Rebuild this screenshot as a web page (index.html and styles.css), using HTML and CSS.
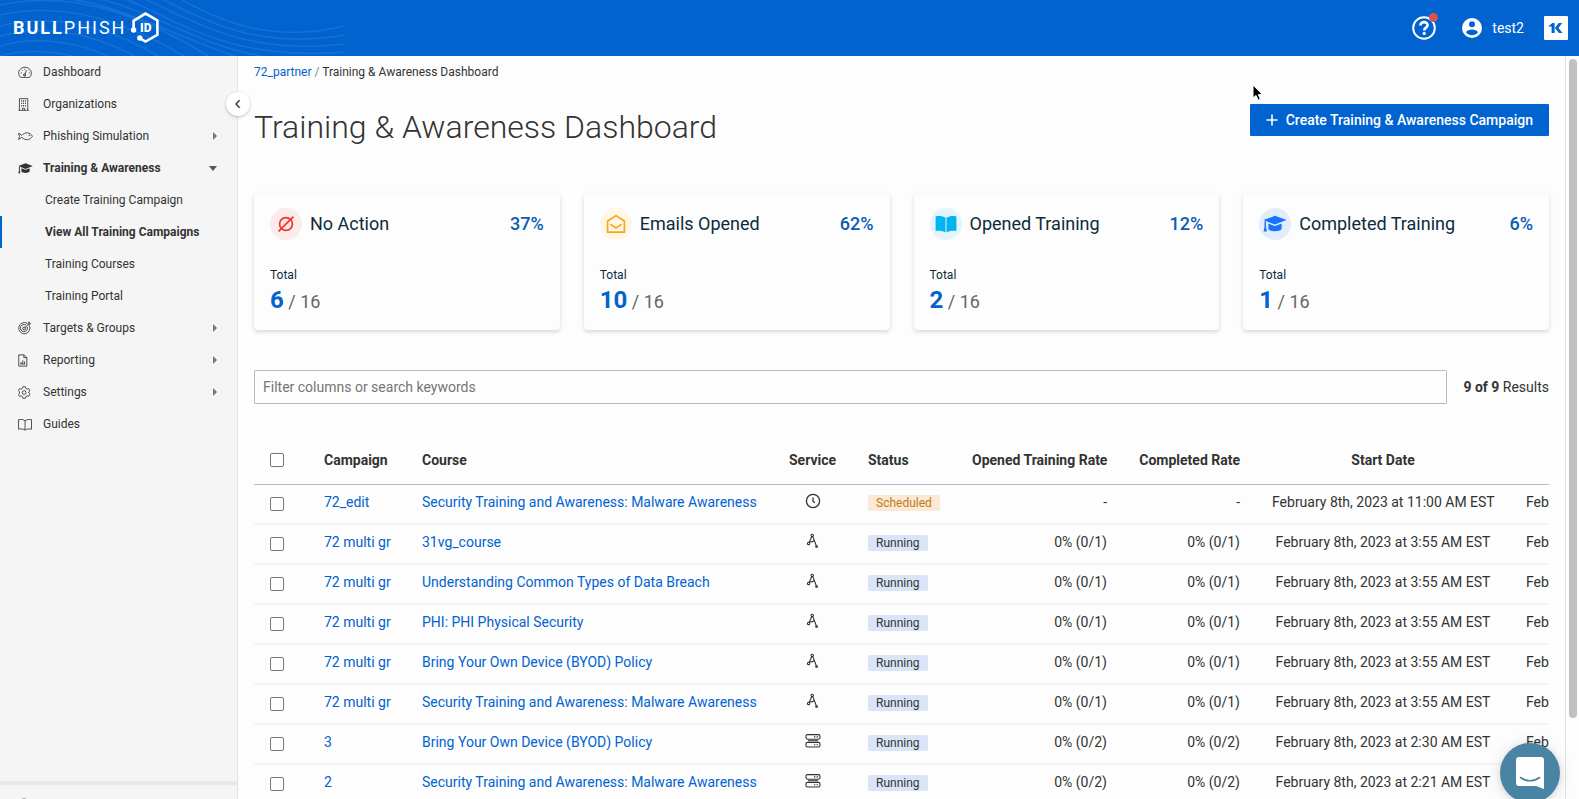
FILE: index.html
```html
<!DOCTYPE html>
<html lang="en">
<head>
    <meta charset="UTF-8">
    <meta name="viewport" content="width=device-width, initial-scale=1.0">
    <title>BullPhish ID - Training &amp; Awareness Dashboard</title>
    <link rel="stylesheet" href="styles.css">
</head>
<body>
    <!-- Shared icons -->
    <svg class="icon-defs" aria-hidden="true">
        <symbol id="icon-clock" viewBox="0 0 16 16">
            <circle cx="8" cy="8" r="6.6" fill="none" stroke="currentColor" stroke-width="1.3"/>
            <path d="M8 4.5V8.2L9.8 9.8" fill="none" stroke="currentColor" stroke-width="1.3"/>
        </symbol>
        <symbol id="icon-compass" viewBox="0 0 16 16">
            <g fill="none" stroke="currentColor" stroke-width="1.1">
                <circle cx="7.2" cy="2.4" r="1.2"/>
                <circle cx="3.6" cy="10.4" r="1.2"/>
                <path d="M6.8 3.6L4.2 9.3M7.8 3.6L11.4 13M5 8.4C6.6 9.2 8.2 8.6 9 7.4"/>
                <circle cx="11.6" cy="13.6" r="0.9"/>
            </g>
        </symbol>
        <symbol id="icon-server" viewBox="0 0 16 16">
            <g fill="none" stroke="currentColor" stroke-width="1.1">
                <rect x="1" y="1.6" width="14" height="4.6" rx="1.6"/>
                <rect x="1" y="9.4" width="14" height="4.6" rx="1.6"/>
                <path d="M3 7.8H13M9 3.9H10.4M11.6 3.9H13M9 11.7H10.4M11.6 11.7H13"/>
            </g>
        </symbol>
        <symbol id="icon-cap" viewBox="0 0 16 12">
            <path fill="currentColor" d="M8 0.5L0.3 3.4L8 6.4L15.7 3.4Z"/>
            <path fill="currentColor" d="M3.6 5.7V9.3C4.8 11.3 11.2 11.3 12.4 9.3V5.7L8 7.4Z"/>
            <path fill="currentColor" d="M1 4.2H2V8L2.6 11H0.4L1 8Z"/>
        </symbol>
    </svg>

    <!-- Top bar -->
    <header class="topbar">
        <svg class="topbar-waves" viewBox="0 0 345 56" aria-hidden="true">
            <g fill="none" stroke="#fff" stroke-width="1.6" stroke-opacity="0.09">
                <path d="M0 56C20 50 50 50 72 56"/>
                <path d="M0 46C30 37 70 39 108 56"/>
                <path d="M0 36C40 26 88 30 134 56"/>
                <path d="M0 26C48 14 100 22 158 56"/>
                <path d="M0 15C56 3 112 14 184 56"/>
                <path d="M0 5C62 -8 128 6 208 56"/>
                <path d="M52 -3C110 0 160 30 234 56"/>
                <path d="M96 -2C150 10 200 46 262 56"/>
                <path d="M122 -2C170 14 220 62 345 52"/>
                <path d="M142 -2C190 18 240 56 345 44"/>
                <path d="M160 -2C205 20 255 50 345 35"/>
                <path d="M178 -2C220 20 268 44 345 26"/>
            </g>
        </svg>
        <a href="#" class="brand">
            <span class="brand-name"><b>BULL</b>PHISH</span>
            <svg class="brand-badge" viewBox="0 0 30 34" aria-label="ID">
                <path d="M3.6 18.5V9.8L15.5 2.6L27.4 9.4V23.8L15.5 30.6L10.5 27.6" fill="none" stroke="#fff" stroke-width="2.6"/>
                <circle cx="3.6" cy="19" r="2.7" fill="#fff"/>
                <circle cx="9.8" cy="27" r="2.7" fill="#fff"/>
                <text x="15.8" y="20.8" class="brand-id">ID</text>
            </svg>
        </a>
        <div class="topbar-actions">
            <button type="button" class="help-btn" aria-label="Help">
                <svg viewBox="0 0 24 24" width="24" height="24">
                    <circle cx="12" cy="12" r="10.8" fill="none" stroke="#fff" stroke-width="2"/>
                    <path d="M8.4 9.4C8.4 4.9 15.8 5.1 15.6 9.3C15.5 11.6 12.2 11.7 12.2 14.4" fill="none" stroke="#fff" stroke-width="2.6"/>
                    <circle cx="12.2" cy="17.4" r="1.6" fill="#fff"/>
                </svg>
                <span class="help-dot"></span>
            </button>
            <button type="button" class="user-btn">
                <svg viewBox="0 0 20 20" width="20" height="20">
                    <circle cx="10" cy="10" r="10" fill="#fff"/>
                    <circle cx="10" cy="6.2" r="3" fill="#0063cf"/>
                    <path d="M4 14.2C5.6 10.6 14.4 10.6 16 14.2C13.6 18.2 6.4 18.2 4 14.2Z" fill="#0063cf"/>
                </svg>
                test2
            </button>
            <a href="#" class="k-logo" aria-label="Kaseya One">
                <svg viewBox="0 0 24 24" width="24" height="24">
                    <path d="M4.6 10L8.4 7H10.6V17H7.6V10.6H4.6ZM11 12L14.6 7H18.2L14.5 12L18.6 17H14.8Z" fill="#0063cf"/>
                </svg>
            </a>
        </div>
    </header>

    <div class="layout">
        <!-- Sidebar -->
        <aside class="sidebar">
            <nav class="side-nav">
                <a href="#" class="side-link">
                    <svg class="side-icon" viewBox="0 0 16 16">
                        <path d="M2.6 13.2C-1.6 8.4 2 2.4 7.5 2.4S16.6 8.4 12.4 13.2Z"/>
                        <path d="M7 11.4L9 5.4M3 8.4H4.2M4.2 5.4L5 6.2M7 4V5M11.4 8.4H12.4M10.8 5.6L11.4 5"/>
                        <circle cx="7" cy="10.6" r="1.2"/>
                    </svg>
                    Dashboard
                </a>
                <a href="#" class="side-link">
                    <svg class="side-icon" viewBox="0 0 16 16">
                        <path d="M0.5 14.2H11.5M1.5 14.2V1.8H10.4V14.2M4.8 14.2V12H7V14.2"/>
                        <path d="M3.4 4.2H4.4M5.4 4.2H6.4M7.4 4.2H8.4M3.4 6.8H4.4M5.4 6.8H6.4M7.4 6.8H8.4M3.4 9.4H4.4M5.4 9.4H6.4M7.4 9.4H8.4" stroke-width="1.5"/>
                    </svg>
                    Organizations
                </a>
                <a href="#" class="side-link has-menu">
                    <svg class="side-icon" viewBox="0 0 16 16">
                        <path d="M0.6 4.4L4.2 6.8C7.4 2.8 13 3.4 15.4 7.8C13 12 7.4 12.6 4.2 8.9L0.6 11.2L1.6 7.9Z"/>
                        <circle cx="12" cy="6.8" r="0.4"/>
                    </svg>
                    Phishing Simulation
                </a>
                <a href="#" class="side-link has-menu open">
                    <svg class="side-icon solid" viewBox="0 0 16 12"><use href="#icon-cap"/></svg>
                    Training &amp; Awareness
                </a>
                <a href="#" class="side-sublink">Create Training Campaign</a>
                <a href="#" class="side-sublink active">View All Training Campaigns</a>
                <a href="#" class="side-sublink">Training Courses</a>
                <a href="#" class="side-sublink">Training Portal</a>
                <a href="#" class="side-link has-menu">
                    <svg class="side-icon" viewBox="0 0 16 16">
                        <path d="M9.6 2.4A6 6 0 1 0 12 4.8M8.8 4.6A3.8 3.8 0 1 0 10 6.4M6.6 8L10.6 4V2.2L12 1V2.6H13.4L12.4 4H10.6"/>
                        <circle cx="6.6" cy="8" r="1.6"/>
                    </svg>
                    Targets &amp; Groups
                </a>
                <a href="#" class="side-link has-menu">
                    <svg class="side-icon" viewBox="0 0 16 16">
                        <path d="M0.8 2H6.4L9.4 4.8V14H0.8ZM6.2 2V5H9.4M3.2 11.8V9.6M5.1 11.8V7.8M7 11.8V9M2.6 11.8H7.6"/>
                    </svg>
                    Reporting
                </a>
                <a href="#" class="side-link has-menu">
                    <svg class="side-icon" viewBox="0 0 16 16">
                        <path d="M5.2 1.8H7.8L8.3 3.6L9.7 4.4L11.5 3.9L12.8 6.1L11.5 7.3V8.7L12.8 9.9L11.5 12.1L9.7 11.6L8.3 12.4L7.8 14.2H5.2L4.7 12.4L3.3 11.6L1.5 12.1L0.4 9.9L1.6 8.7V7.3L0.4 6.1L1.5 3.9L3.3 4.4L4.7 3.6Z" stroke-linejoin="round"/>
                        <circle cx="6.5" cy="8" r="2"/>
                    </svg>
                    Settings
                </a>
                <a href="#" class="side-link">
                    <svg class="side-icon" viewBox="0 0 16 16">
                        <path d="M7.5 4C5.6 2.6 3 2.4 0.6 2.8V13C3 12.6 5.6 12.6 7.5 14C9.4 12.6 12 12.6 14.4 13V2.8C12 2.4 9.4 2.6 7.5 4ZM7.5 4V13.8"/>
                    </svg>
                    Guides
                </a>
            </nav>
            <div class="side-footer">
                <a href="#" class="side-link">
                    <svg class="side-icon" viewBox="0 0 16 16"><circle cx="6.5" cy="7" r="6"/></svg>
                    Get Help
                </a>
            </div>
            <button type="button" class="collapse-btn" aria-label="Collapse menu">
                <svg viewBox="0 0 8 10" width="8" height="10"><path d="M5.6 1.2L2 5L5.6 8.8" fill="none" stroke="#333" stroke-width="1.4"/></svg>
            </button>
        </aside>

        <!-- Main content -->
        <main class="content">
            <div class="breadcrumb"><a href="#">72_partner</a> <span>/</span> Training &amp; Awareness Dashboard</div>

            <div class="page-head">
                <h1>Training &amp; Awareness Dashboard</h1>
                <button type="button" class="btn-primary">
                    <svg viewBox="0 0 12 12" width="12" height="12"><path d="M6 0.5V11.5M0.5 6H11.5" stroke="#fff" stroke-width="1.6"/></svg>
                    Create Training &amp; Awareness Campaign
                </button>
            </div>

            <!-- Summary cards -->
            <section class="cards">
                <div class="card">
                    <div class="card-head">
                        <span class="card-icon red">
                            <svg viewBox="0 0 20 20" width="20" height="20"><g fill="none" stroke="#f5322d" stroke-width="1.7"><circle cx="10" cy="10" r="6.4"/><path d="M2.6 17.4L17.4 2.6"/></g></svg>
                        </span>
                        <h2>No Action</h2>
                        <span class="percent">37%</span>
                    </div>
                    <p class="total-label">Total</p>
                    <p class="total"><b>6</b> / 16</p>
                </div>
                <div class="card">
                    <div class="card-head">
                        <span class="card-icon yellow">
                            <svg viewBox="0 0 20 20" width="20" height="20"><g fill="none" stroke="#faa61a" stroke-width="1.7" stroke-linejoin="round"><path d="M1.6 7L10 1.6L18.4 7V18.2H1.6Z"/><path d="M4.4 10.2L10 14L15.6 10.2"/></g></svg>
                        </span>
                        <h2>Emails Opened</h2>
                        <span class="percent">62%</span>
                    </div>
                    <p class="total-label">Total</p>
                    <p class="total"><b>10</b> / 16</p>
                </div>
                <div class="card">
                    <div class="card-head">
                        <span class="card-icon cyan">
                            <svg viewBox="0 0 22 18" width="22" height="18"><path d="M0.6 1.4C4 0.8 8 1 10.5 2.8V17.4C8 15.6 4 15.4 0.6 16ZM21.4 1.4C18 0.8 14 1 11.5 2.8V17.4C14 15.6 18 15.4 21.4 16Z" fill="#00b5ee"/></svg>
                        </span>
                        <h2>Opened Training</h2>
                        <span class="percent">12%</span>
                    </div>
                    <p class="total-label">Total</p>
                    <p class="total"><b>2</b> / 16</p>
                </div>
                <div class="card">
                    <div class="card-head">
                        <span class="card-icon blue">
                            <svg viewBox="0 0 16 12" width="24" height="18"><use href="#icon-cap"/></svg>
                        </span>
                        <h2>Completed Training</h2>
                        <span class="percent">6%</span>
                    </div>
                    <p class="total-label">Total</p>
                    <p class="total"><b>1</b> / 16</p>
                </div>
            </section>

            <!-- Filter -->
            <div class="filter-row">
                <input type="text" class="filter-input" placeholder="Filter columns or search keywords" aria-label="Filter columns or search keywords">
                <span class="results"><b>9 of 9</b> Results</span>
            </div>

            <!-- Campaigns table -->
            <div class="table-wrap">
                <table class="campaigns">
                    <thead>
                        <tr>
                            <th class="col-check"><input type="checkbox" aria-label="Select all"></th>
                            <th class="col-campaign">Campaign</th>
                            <th class="col-course">Course</th>
                            <th class="col-service">Service</th>
                            <th class="col-status">Status</th>
                            <th class="col-opened">Opened Training Rate</th>
                            <th class="col-completed">Completed Rate</th>
                            <th class="col-date">Start Date</th>
                            <th class="col-date">End Date</th>
                        </tr>
                    </thead>
                    <tbody>
                        <tr>
                            <td><input type="checkbox" aria-label="Select 72_edit"></td>
                            <td><a href="#">72_edit</a></td>
                            <td><a href="#">Security Training and Awareness: Malware Awareness</a></td>
                            <td class="center"><svg class="service-icon"><use href="#icon-clock"/></svg></td>
                            <td><span class="tag scheduled">Scheduled</span></td>
                            <td class="right">-</td>
                            <td class="right">-</td>
                            <td class="center">February 8th, 2023 at 11:00 AM EST</td>
                            <td>February 8th, 2023</td>
                        </tr>
                        <tr>
                            <td><input type="checkbox" aria-label="Select 72 multi gr"></td>
                            <td><a href="#">72 multi gr</a></td>
                            <td><a href="#">31vg_course</a></td>
                            <td class="center"><svg class="service-icon"><use href="#icon-compass"/></svg></td>
                            <td><span class="tag">Running</span></td>
                            <td class="right">0% (0/1)</td>
                            <td class="right">0% (0/1)</td>
                            <td class="center">February 8th, 2023 at 3:55 AM EST</td>
                            <td>February 8th, 2023</td>
                        </tr>
                        <tr>
                            <td><input type="checkbox" aria-label="Select 72 multi gr"></td>
                            <td><a href="#">72 multi gr</a></td>
                            <td><a href="#">Understanding Common Types of Data Breach</a></td>
                            <td class="center"><svg class="service-icon"><use href="#icon-compass"/></svg></td>
                            <td><span class="tag">Running</span></td>
                            <td class="right">0% (0/1)</td>
                            <td class="right">0% (0/1)</td>
                            <td class="center">February 8th, 2023 at 3:55 AM EST</td>
                            <td>February 8th, 2023</td>
                        </tr>
                        <tr>
                            <td><input type="checkbox" aria-label="Select 72 multi gr"></td>
                            <td><a href="#">72 multi gr</a></td>
                            <td><a href="#">PHI: PHI Physical Security</a></td>
                            <td class="center"><svg class="service-icon"><use href="#icon-compass"/></svg></td>
                            <td><span class="tag">Running</span></td>
                            <td class="right">0% (0/1)</td>
                            <td class="right">0% (0/1)</td>
                            <td class="center">February 8th, 2023 at 3:55 AM EST</td>
                            <td>February 8th, 2023</td>
                        </tr>
                        <tr>
                            <td><input type="checkbox" aria-label="Select 72 multi gr"></td>
                            <td><a href="#">72 multi gr</a></td>
                            <td><a href="#">Bring Your Own Device (BYOD) Policy</a></td>
                            <td class="center"><svg class="service-icon"><use href="#icon-compass"/></svg></td>
                            <td><span class="tag">Running</span></td>
                            <td class="right">0% (0/1)</td>
                            <td class="right">0% (0/1)</td>
                            <td class="center">February 8th, 2023 at 3:55 AM EST</td>
                            <td>February 8th, 2023</td>
                        </tr>
                        <tr>
                            <td><input type="checkbox" aria-label="Select 72 multi gr"></td>
                            <td><a href="#">72 multi gr</a></td>
                            <td><a href="#">Security Training and Awareness: Malware Awareness</a></td>
                            <td class="center"><svg class="service-icon"><use href="#icon-compass"/></svg></td>
                            <td><span class="tag">Running</span></td>
                            <td class="right">0% (0/1)</td>
                            <td class="right">0% (0/1)</td>
                            <td class="center">February 8th, 2023 at 3:55 AM EST</td>
                            <td>February 8th, 2023</td>
                        </tr>
                        <tr>
                            <td><input type="checkbox" aria-label="Select 3"></td>
                            <td><a href="#">3</a></td>
                            <td><a href="#">Bring Your Own Device (BYOD) Policy</a></td>
                            <td class="center"><svg class="service-icon"><use href="#icon-server"/></svg></td>
                            <td><span class="tag">Running</span></td>
                            <td class="right">0% (0/2)</td>
                            <td class="right">0% (0/2)</td>
                            <td class="center">February 8th, 2023 at 2:30 AM EST</td>
                            <td>February 8th, 2023</td>
                        </tr>
                        <tr>
                            <td><input type="checkbox" aria-label="Select 2"></td>
                            <td><a href="#">2</a></td>
                            <td><a href="#">Security Training and Awareness: Malware Awareness</a></td>
                            <td class="center"><svg class="service-icon"><use href="#icon-server"/></svg></td>
                            <td><span class="tag">Running</span></td>
                            <td class="right">0% (0/2)</td>
                            <td class="right">0% (0/2)</td>
                            <td class="center">February 8th, 2023 at 2:21 AM EST</td>
                            <td>February 8th, 2023</td>
                        </tr>
                    </tbody>
                </table>
            </div>
        </main>

        <div class="scroll-track"><div class="scroll-thumb"></div></div>
    </div>

    <!-- Chat launcher -->
    <button type="button" class="chat-btn" aria-label="Open chat">
        <svg viewBox="0 0 28 32" width="28" height="32">
            <path d="M3 0H25A3 3 0 0 1 28 3V32L20 29H3A3 3 0 0 1 0 26V3A3 3 0 0 1 3 0Z" fill="#fff"/>
            <path d="M4.5 20.5C10 24.8 18 24.8 23.5 20.5" fill="none" stroke="#4a84a5" stroke-width="1.6" stroke-linecap="round"/>
        </svg>
    </button>

    <!-- Mouse pointer -->
    <svg class="pointer" viewBox="0 0 12 18" aria-hidden="true">
        <path d="M1 1V14L4 11.4L6.2 16.2L8.4 15.2L6.3 10.6H10.4Z" fill="#000" stroke="#fff" stroke-width="1"/>
    </svg>
</body>
</html>
```

FILE: styles.css
```css
/* Reset and base styles */
* {
    margin: 0;
    padding: 0;
    box-sizing: border-box;
}

body {
    font-family: Roboto, 'Liberation Sans', sans-serif;
    font-size: 14px;
    line-height: 20px;
    color: #333;
    background-color: #fdfdfd;
    height: 100vh;
    display: flex;
    flex-direction: column;
    overflow: hidden;
}

a {
    color: #0063cf;
    text-decoration: none;
}

button {
    font-family: inherit;
    border: none;
    cursor: pointer;
}

.icon-defs {
    position: absolute;
    width: 0;
    height: 0;
}

/* Top bar */
.topbar {
    position: relative;
    flex: none;
    height: 56px;
    padding: 0 11px 0 13px;
    background-color: #0063cf;
    color: white;
    display: flex;
    justify-content: space-between;
    align-items: center;
}

.topbar-waves {
    position: absolute;
    top: 0;
    left: 0;
    width: 345px;
    height: 56px;
}

.brand {
    position: relative;
    display: flex;
    align-items: center;
    gap: 4px;
    color: white;
}

.brand-name {
    font-size: 18px;
    letter-spacing: 2px;
}

.brand-badge {
    width: 30px;
    height: 34px;
}

.brand-id {
    font-size: 12px;
    font-weight: 900;
    text-anchor: middle;
    fill: white;
}

.topbar-actions {
    display: flex;
    align-items: center;
    gap: 20px;
}

.help-btn {
    position: relative;
    width: 30px;
    height: 24px;
    background: none;
    text-align: left;
}

.help-btn svg,
.user-btn svg,
.k-logo svg {
    display: block;
}

.help-dot {
    position: absolute;
    top: -3px;
    right: 4px;
    width: 9px;
    height: 9px;
    border-radius: 50%;
    background-color: #d9534f;
}

.user-btn {
    display: flex;
    align-items: center;
    gap: 10px;
    background: none;
    color: white;
    font-size: 14px;
}

.k-logo {
    background-color: white;
    border-radius: 1px;
}

/* Layout */
.layout {
    flex: 1;
    min-height: 0;
    display: flex;
}

/* Sidebar */
.sidebar {
    position: relative;
    flex: none;
    width: 238px;
    background-color: #f5f5f5;
    border-right: 1px solid #e3e3e3;
    display: flex;
    flex-direction: column;
}

.side-nav {
    flex: 1;
    min-height: 0;
    overflow: hidden;
}

.side-link {
    display: flex;
    align-items: center;
    height: 32px;
    padding: 0 20px 0 18px;
    font-size: 12px;
    color: #333;
}

.side-icon {
    flex: none;
    width: 15px;
    height: 15px;
    margin-right: 10px;
    fill: none;
    stroke: #333;
    stroke-width: 0.9;
}

.side-icon.solid {
    color: #333;
    stroke: none;
}

.has-menu::after {
    content: "";
    margin-left: auto;
    border: 4px solid transparent;
    border-left-color: #777;
    border-right-width: 0;
}

.has-menu.open {
    font-weight: bold;
}

.has-menu.open::after {
    border: 4px solid transparent;
    border-top: 5px solid #555;
    border-bottom-width: 0;
}

.side-sublink {
    display: block;
    height: 32px;
    line-height: 32px;
    padding-left: 45px;
    font-size: 12px;
    color: #333;
}

.side-sublink.active {
    font-weight: bold;
    border-left: 2px solid #0063cf;
    padding-left: 43px;
}

.side-footer {
    flex: none;
    height: 18px;
    border-top: 4px solid #e9e9e9;
    padding-top: 4px;
    overflow: hidden;
}

.collapse-btn {
    position: absolute;
    top: 36px;
    right: -13px;
    width: 24px;
    height: 24px;
    border-radius: 50%;
    background-color: white;
    box-shadow: 0 1px 3px rgba(0,0,0,0.25);
    display: flex;
    align-items: center;
    justify-content: center;
}

/* Main content */
.content {
    flex: 1;
    min-width: 0;
    padding: 0 16px;
    border-right: 1px solid #e3e3e3;
    overflow: hidden;
}

.breadcrumb {
    font-size: 12px;
    line-height: 32px;
}

.breadcrumb span {
    color: #888;
}

.page-head {
    display: flex;
    justify-content: space-between;
    align-items: flex-start;
    padding-top: 16px;
    height: 105px;
}

h1 {
    font-size: 32px;
    font-weight: 300;
    line-height: 46px;
}

.btn-primary {
    display: flex;
    align-items: center;
    gap: 8px;
    height: 32px;
    padding: 0 16px;
    border-radius: 1px;
    background-color: #0063cf;
    color: white;
    font-size: 14px;
    font-weight: 500;
}

/* Summary cards */
.cards {
    display: grid;
    grid-template-columns: repeat(4, 1fr);
    gap: 24px;
}

.card {
    height: 137px;
    padding: 15px 16px;
    border-radius: 4px;
    background-color: #fdfdfd;
    box-shadow: 0 2px 4px rgba(0,0,0,0.15);
}

.card-head {
    display: flex;
    align-items: center;
    gap: 8px;
}

.card-icon {
    width: 32px;
    height: 32px;
    border-radius: 50%;
    display: flex;
    align-items: center;
    justify-content: center;
}

.card-icon.red {
    background-color: #fbebea;
}

.card-icon.yellow {
    background-color: #fff6e5;
}

.card-icon.cyan {
    background-color: #e5f4fc;
}

.card-icon.blue {
    background-color: #e3edfa;
    color: #1673ff;
}

h2 {
    font-size: 18px;
    font-weight: normal;
    color: #0b2b3c;
}

.percent {
    margin-left: auto;
    font-size: 18px;
    font-weight: 500;
    color: #0b5cb5;
}

.total-label {
    margin-top: 25px;
    font-size: 12px;
    color: #0b2b3c;
}

.total {
    font-size: 18px;
    line-height: 30px;
    color: #666;
}

.total b {
    font-size: 24px;
    color: #0063cf;
}

/* Filter */
.filter-row {
    display: flex;
    align-items: center;
    gap: 16px;
    margin-top: 40px;
}

.filter-input {
    flex: 1;
    height: 34px;
    padding: 0 8px;
    border: 1px solid #bbb;
    border-radius: 1px;
    background-color: #fdfdfd;
    font-family: inherit;
    font-size: 14px;
}

.filter-input::placeholder {
    color: #757575;
}

/* Campaigns table */
.table-wrap {
    margin-top: 32px;
    overflow: hidden;
}

.campaigns {
    table-layout: fixed;
    width: 1510px;
    border-collapse: collapse;
    white-space: nowrap;
}

.campaigns th,
.campaigns td {
    padding: 0 16px;
    text-align: left;
}

.campaigns th {
    height: 48px;
    font-weight: bold;
    border-bottom: 1px solid #bbb;
}

.campaigns td {
    height: 40px;
    padding-bottom: 4px;
    border-bottom: 2px solid #f4f4f4;
}

.col-check {
    width: 54px;
}

.col-campaign {
    width: 98px;
}

.col-course {
    width: 367px;
}

.col-service {
    width: 79px;
}

.col-status {
    width: 104px;
}

.col-opened {
    width: 167px;
}

.col-completed {
    width: 133px;
}

.col-date {
    width: 254px;
}

.campaigns .right,
.campaigns .col-opened,
.campaigns .col-completed {
    text-align: right;
}

.campaigns .center,
.campaigns .col-service,
.campaigns .col-date {
    text-align: center;
}

.campaigns input {
    appearance: none;
    display: block;
    width: 14px;
    height: 14px;
    border: 1px solid #767676;
    border-radius: 2px;
    background-color: white;
}

.campaigns td input {
    margin-top: 4px;
}

.service-icon {
    display: block;
    width: 16px;
    height: 16px;
    margin: 0 auto 2px;
}

.tag {
    display: inline-block;
    padding: 0 8px;
    border-radius: 2px;
    background-color: #d9e5f6;
    font-size: 12px;
    line-height: 16px;
}

.tag.scheduled {
    background-color: #fae9d7;
    color: #c07a10;
}

/* Scrollbar */
.scroll-track {
    flex: none;
    width: 13px;
    padding: 3px 2px 0 3px;
}

.scroll-thumb {
    height: 89%;
    border-radius: 4px;
    background-color: #c1c1c1;
}

/* Chat launcher */
.chat-btn {
    position: fixed;
    right: 19px;
    bottom: -4px;
    width: 60px;
    height: 60px;
    border-radius: 50%;
    background-color: #4a84a5;
    box-shadow: 0 1px 6px rgba(0,0,0,0.1), 0 2px 16px rgba(0,0,0,0.12);
    display: flex;
    align-items: center;
    justify-content: center;
}

/* Mouse pointer */
.pointer {
    position: fixed;
    top: 84px;
    left: 1252px;
    width: 12px;
    height: 18px;
}
```
